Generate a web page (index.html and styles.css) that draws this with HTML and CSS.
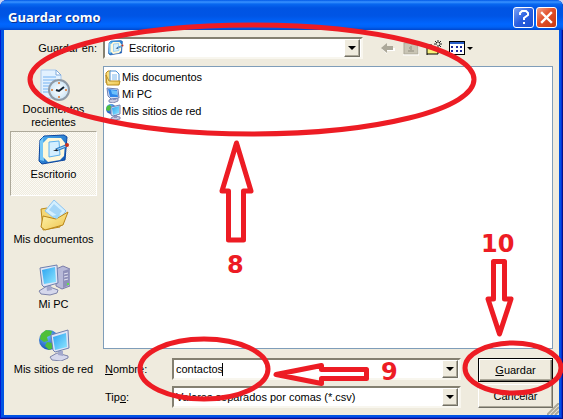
FILE: index.html
```html
<!DOCTYPE html>
<html lang="es">
<head>
  <meta charset="UTF-8">
  <title>Guardar como</title>
  <link rel="stylesheet" href="styles.css">
</head>
<body>

  <!-- Shared icons -->
  <svg class="defs" width="0" height="0" aria-hidden="true">
    <defs>
      <linearGradient id="screen" x1="0" y1="0" x2="1" y2="1">
        <stop offset="0" stop-color="#2ba3f0"/>
        <stop offset="1" stop-color="#8fe6ff"/>
      </linearGradient>
      <linearGradient id="folder" x1="0" y1="0" x2="1" y2="1">
        <stop offset="0" stop-color="#fff6b0"/>
        <stop offset="1" stop-color="#edc34c"/>
      </linearGradient>
      <linearGradient id="blue" x1="0" y1="0" x2="1" y2="1">
        <stop offset="0" stop-color="#4fb4f5"/>
        <stop offset="1" stop-color="#0b50b0"/>
      </linearGradient>
      <radialGradient id="globe" cx="0.4" cy="0.3" r="0.8">
        <stop offset="0" stop-color="#6fc4ff"/>
        <stop offset="1" stop-color="#0a3fae"/>
      </radialGradient>
      <radialGradient id="clock">
        <stop offset="0" stop-color="#ffffff"/>
        <stop offset="1" stop-color="#cbe4f6"/>
      </radialGradient>
    </defs>

    <symbol id="icon-recent" viewBox="0 0 32 32">
      <path d="M3 1h15l5 5v23H3z" fill="#e2f1ff" stroke="#a9c9ee"/>
      <path d="M18 1v5h5z" fill="#fff" stroke="#7fa9dc"/>
      <path d="M5 8h13M5 11h13M5 14h9M5 17h6M5 20h5M5 23h6" stroke="#75b2f2"/>
      <circle cx="21" cy="21" r="10" fill="url(#clock)" stroke="#8f9aa6" stroke-width="2"/>
      <path d="M21 13v2M21 27v2M13 21h2M27 21h2" stroke="#e0905a" stroke-width="2"/>
      <path d="M26 18l-5 4-3-1" fill="none" stroke="#123" stroke-width="2"/>
    </symbol>

    <symbol id="icon-desktop" viewBox="0 0 32 32">
      <path d="M6 2l20-1 3 2-2 23-23 4-3-3L2 6z" fill="url(#blue)" stroke="#0a459f"/>
      <path d="M2 7l3-4 1 24-4-1z" fill="#78c7f6"/>
      <path d="M10 4h13l4 5-1 13-4 4-12 2-5-5V9z" fill="#fff8d9"/>
      <path d="M11 8l10-1 1 14-11 2z" fill="#d4efff" stroke="#5cb0ee"/>
      <path d="M18 16l10-4" stroke="#2f7cc4" stroke-width="3"/>
      <path d="M18 16l10-4" stroke="#a8ddff"/>
      <path d="M15 17l4-2 1 2z" fill="#222"/>
      <circle cx="29" cy="11" r="2" fill="#c8321e"/>
    </symbol>

    <symbol id="icon-docs" viewBox="0 0 32 32">
      <path d="M3 10l6-1 3 3 10 1v15l-17 3z" fill="#f3d776" stroke="#bc8a1a"/>
      <path d="M16 1l12 11-8 10L7 12z" fill="#d3efff" stroke="#8cc4f0"/>
      <path d="M16 5l8 7-4 5-9-6z" fill="#a4d6f8"/>
      <path d="M5 17l13 3 12-7-5 13-18 5-4-3z" fill="url(#folder)" stroke="#b98518"/>
      <path d="M14 17l9-2-4 5z" fill="#9ad7fb"/>
    </symbol>

    <symbol id="icon-folder" viewBox="0 0 16 16">
      <path d="M1 3l2-2h3v12H1z" fill="#f9dc7c" stroke="#b98b1f"/>
      <path d="M5 1h6l3 3v8H5z" fill="#fff" stroke="#4a90d6"/>
      <path d="M7 5h5M7 7h5M7 9h5" stroke="#7bb8ef"/>
      <path d="M1 5l3 6h11l-1 4H2z" fill="url(#folder)" stroke="#b98b1f"/>
    </symbol>

    <symbol id="icon-pc-small" viewBox="0 0 16 16">
      <path d="M4 13l5-2 4 1v2l-5 2-4-1z" fill="#c9cce4" stroke="#8388b0"/>
      <path d="M8 10h3v3H8z" fill="#9297c0"/>
      <path d="M2 1l11 1 1 9-8 1-3-3z" fill="#d8e0f4" stroke="#7080b0"/>
      <path d="M3 2l9 1 1 7-8 0z" fill="#2f86ea"/>
      <path d="M6 3l6 1v4L7 7z" fill="#6cc0fb"/>
    </symbol>

    <symbol id="icon-network-small" viewBox="0 0 16 16">
      <circle cx="6" cy="5" r="5" fill="url(#globe)"/>
      <path d="M2 2l3-1 2 3-3 3-3-1z" fill="#4fbf3a"/>
      <path d="M6 14l4-2 5 1v2l-5 1-4-1z" fill="#c9cce4" stroke="#8388b0"/>
      <path d="M9 11h3v3H9z" fill="#9297c0"/>
      <path d="M6 3l9-2v9l-7 2-2-1z" fill="#d8e0f4" stroke="#7080b0"/>
      <path d="M7 4l7-2v7l-6 2z" fill="url(#screen)"/>
    </symbol>

    <symbol id="icon-pc" viewBox="0 0 32 32">
      <path d="M18 5l7-3 7 3v17l-8 3-6-3z" fill="#b8b9d8" stroke="#7b7ca8"/>
      <path d="M25 7l6-2v16l-6 3z" fill="#8f90b9"/>
      <path d="M26 10l4-1M26 13l4-1M26 16l4-1" stroke="#e3e3f2"/>
      <path d="M29 19h2v2h-2z" fill="#5fe04a"/>
      <path d="M1 27l8-5 11 4-1 3-7 2-9-1z" fill="#d6d8ec" stroke="#7e84aa"/>
      <path d="M8 20l5 1 1 5-5 1z" fill="#a3a8cc"/>
      <path d="M2 4l17-3 1 18-14 4-2-2z" fill="#dfe5f6" stroke="#6f7fae"/>
      <path d="M4 6l13-3 1 15-12 2z" fill="url(#screen)"/>
    </symbol>

    <symbol id="icon-network" viewBox="0 0 32 32">
      <circle cx="11" cy="11" r="10" fill="url(#globe)"/>
      <path d="M3 5l5-4 6 1-1 4-4 2 1 4-4 1-4-3zM9 13l5 1 1 5-4 2-4-4z" fill="#4fbf3a"/>
      <path d="M12 28l7-4 11 3v2l-7 3-9-1z" fill="#d6d8ec" stroke="#7e84aa"/>
      <path d="M20 21l5 1v5l-5-1z" fill="#a3a8cc"/>
      <path d="M13 6l17-5 1 18-14 4-2-2z" fill="#dfe5f6" stroke="#6f7fae"/>
      <path d="M15 8l13-4 1 14-12 3z" fill="url(#screen)"/>
    </symbol>
  </svg>

  <div class="window">
    <header class="titlebar">
      <h1>Guardar como</h1>
      <button class="title-btn help" aria-label="Ayuda">
        <svg viewBox="0 0 19 19"><path d="M6 7V5l2-2h4l2 2v2l-4 3v2M10 14v2" fill="none" stroke="#fff" stroke-width="2"/></svg>
      </button>
      <button class="title-btn close" aria-label="Cerrar">
        <svg viewBox="0 0 19 19"><path d="M5 5l9 9M14 5l-9 9" stroke="#fff" stroke-width="2.4" stroke-linecap="square"/></svg>
      </button>
    </header>

    <main class="client">
      <label class="look-label" for="lookIn">Gua<u>r</u>dar en:</label>
      <div class="look-row">
        <div class="combo">
          <svg class="icon-small"><use href="#icon-desktop"/></svg>
          <select id="lookIn">
            <option>Escritorio</option>
          </select>
          <span class="drop"></span>
        </div>
        <div class="toolbar">
          <button aria-label="Atrás">
            <svg viewBox="0 0 16 16"><path d="M2 9l5-4v3h8v3H7v3z" fill="#fff"/><path d="M1 8l6-5v3h6v4H7v3z" fill="#aca899"/></svg>
          </button>
          <button aria-label="Subir un nivel">
            <svg viewBox="0 0 16 16"><path d="M1 3h6l1 1h7v10H1z" fill="#c9c5b5" stroke="#aca899"/><path d="M5 11h6M6 8h1M8 6v4" stroke="#aca899" stroke-width="2"/><path d="M0 15h16V4" fill="none" stroke="#fff"/></svg>
          </button>
          <button aria-label="Crear nueva carpeta">
            <svg viewBox="0 0 16 16"><path d="M1 5h4l1 2h6v7H1z" fill="#f7f07a"/><path d="M1 15V5h5M1 14h11V8" fill="none" stroke="#000"/><path d="M12 0v3M12 5v3M8 4h3M13 4h3M9 1l2 2M15 1l-2 2M15 7l-2-2" stroke="#222"/></svg>
          </button>
          <button class="views" aria-label="Menú Ver">
            <svg viewBox="0 0 16 16"><path d="M0 1h16v14H0z"/><path d="M1 4h14v10H1z" fill="#fff"/><path d="M1 2h14v2H1z" fill="#2a5fc8"/><path d="M2 6h2v2H2zM7 6h2v2H7zM11 6h2v2h-2zM2 10h2v2H2zM7 10h2v2H7zM11 10h2v2h-2z" fill="#1c2a9a"/></svg>
            <span class="arrow"></span>
          </button>
        </div>
      </div>

      <nav class="places">
        <button class="place"><svg><use href="#icon-recent"/></svg>Documentos recientes</button>
        <button class="place selected"><svg><use href="#icon-desktop"/></svg>Escritorio</button>
        <button class="place"><svg><use href="#icon-docs"/></svg>Mis documentos</button>
        <button class="place"><svg><use href="#icon-pc"/></svg>Mi PC</button>
        <button class="place"><svg><use href="#icon-network"/></svg>Mis sitios de red</button>
      </nav>

      <ul class="files">
        <li><svg class="icon-small"><use href="#icon-folder"/></svg>Mis documentos</li>
        <li><svg class="icon-small"><use href="#icon-pc-small"/></svg>Mi PC</li>
        <li><svg class="icon-small"><use href="#icon-network-small"/></svg>Mis sitios de red</li>
      </ul>

      <form class="bottom">
        <div class="fields">
          <label for="fileName"><u>N</u>ombre:</label>
          <div class="combo">
            <input type="text" id="fileName" value="contactos">
            <span class="caret"></span>
            <span class="drop"></span>
          </div>
          <label for="fileType">Tip<u>o</u>:</label>
          <div class="combo">
            <select id="fileType">
              <option>Valores separados por comas (*.csv)</option>
            </select>
            <span class="drop"></span>
          </div>
        </div>
        <div class="actions">
          <button type="button" class="btn default"><span><u>G</u>uardar</span></button>
          <button type="button" class="btn">Cancelar</button>
        </div>
      </form>
    </main>

    <svg class="grip" viewBox="0 0 12 12" aria-hidden="true">
      <path d="M0 12L12 0M4 12l8-8M8 12l4-4" stroke="#aca899" stroke-width="2"/>
    </svg>

    <!-- Tutorial steps drawn over the dialog -->
    <svg class="marks" viewBox="0 0 563 419">
      <g fill="none" stroke="#ed1c24" stroke-width="5" stroke-linejoin="round">
        <ellipse cx="252" cy="79.500" rx="222" ry="54.500"/>
        <ellipse cx="204" cy="369" rx="64" ry="30"/>
        <ellipse cx="513" cy="368" rx="48" ry="25"/>
        <path d="M236.500 143L251 191h-7.500v49h-15v-49H222z"/>
        <path d="M499.500 334L511 299h-6.500v-37.500h-11V299H488z"/>
        <path d="M276 374.500L321.500 365.500v4h45v9h-45v5z"/>
      </g>
      <text x="227" y="273">8</text>
      <text x="381" y="380">9</text>
      <text x="481" y="252">10</text>
    </svg>
  </div>

</body>
</html>
```
FILE: styles.css
```css
* {
  box-sizing: border-box;
  margin: 0;
  padding: 0;
}

body {
  font-family: "Liberation Sans", Arial, sans-serif;
  font-size: 11px;
  line-height: 13px;
  color: #000;
  background: #c8d4f4;
}

button,
input,
select {
  font: inherit;
  color: inherit;
  border: none;
  background: none;
}

.defs {
  position: absolute;
}

.window {
  position: relative;
  display: flex;
  flex-direction: column;
  min-height: 100vh;
  padding: 0 4px 4px;
  background: #0054e3;
  border-radius: 7px 7px 0 0;
  box-shadow: inset 1px 0 #0019cf, inset -1px -1px #00138c, inset -2px -2px #0831d9;
  overflow: hidden;
}

/* Title bar */
.titlebar {
  display: flex;
  align-items: center;
  gap: 2px;
  height: 30px;
  margin: 0 -4px;
  padding: 4px 6px 0 8px;
  background: linear-gradient(#0058e6 0, #3a93ff 2px, #0868f0 4px, #0054e3 8px, #0055e5 16px, #0066ff 24px, #0062f5 27px, #0046cc 30px);
}

.titlebar h1 {
  flex: 1;
  font-family: "Open Sans", "Noto Sans", sans-serif;
  font-size: 13px;
  line-height: 18px;
  font-weight: bold;
  color: #fff;
  text-shadow: 1px 1px #0a2f8c;
}

.title-btn {
  width: 21px;
  height: 21px;
  border: 1px solid #fff;
  border-radius: 3px;
}

.title-btn svg {
  display: block;
  width: 19px;
  height: 19px;
}

.help {
  background: linear-gradient(135deg, #7ba2f5, #2a5fe0 50%, #1c50d0);
}

.close {
  background: linear-gradient(135deg, #f0a088, #e2502a 45%, #c83810);
}

/* Dialog body */
.client {
  flex: 1;
  display: grid;
  grid-template-columns: 87px 1fr;
  grid-template-rows: 22px 1fr auto;
  column-gap: 6px;
  padding: 7px 6px 7px;
  background: #efebde;
}

.look-label {
  align-self: center;
  justify-self: end;
}

.look-row {
  display: grid;
  grid-template-columns: 1fr 173px;
  gap: 17px;
}

.combo {
  position: relative;
  display: flex;
  align-items: center;
  height: 22px;
  padding: 1px;
  background: #fff;
  border: 2px solid;
  border-color: #848071 #f8f6ee #f8f6ee #848071;
}

.combo select,
.combo input {
  flex: 1;
  min-width: 0;
  height: 16px;
  padding-left: 1px;
  appearance: none;
  outline: none;
}

.combo .icon-small + select {
  padding-left: 5px;
}

.drop {
  display: flex;
  align-items: center;
  justify-content: center;
  width: 16px;
  height: 18px;
  background: #efebde;
  border: 1px solid;
  border-color: #fff #716f64 #716f64 #fff;
  box-shadow: inset -1px -1px #aca899;
}

.drop::before,
.arrow {
  content: "";
  border: solid transparent;
  border-width: 4px 4px 0;
  border-top-color: #000;
}

.caret {
  position: absolute;
  left: 48px;
  top: 3px;
  width: 1px;
  height: 13px;
  background: #000;
}

.icon-small {
  width: 16px;
  height: 16px;
  margin-left: 2px;
}

.toolbar {
  display: flex;
  align-items: center;
  gap: 7px;
}

.toolbar button {
  display: flex;
  align-items: center;
  gap: 2px;
}

.toolbar svg {
  width: 16px;
  height: 16px;
}

.toolbar .arrow {
  border-width: 3px 3px 0;
}

/* Places bar */
.places {
  grid-row: 2 / 4;
  display: grid;
  grid-template-columns: minmax(0, 1fr);
  grid-auto-rows: 65px;
  margin-top: 7px;
}

.place {
  display: flex;
  flex-direction: column;
  align-items: center;
  gap: 2px;
  padding: 2px 0;
  border: 1px solid transparent;
}

.place svg {
  flex: none;
  width: 32px;
  height: 32px;
}

.place.selected {
  border-color: #aca899 #fff #fff #aca899;
  background: repeating-conic-gradient(#fbfaf5 0 25%, #efebde 0 50%) 0 0 / 2px 2px;
}

/* File list */
.files {
  margin-top: 7px;
  padding: 2px 0;
  list-style: none;
  background: #fff;
  border: 1px solid #7f9db9;
}

.files li {
  display: flex;
  align-items: center;
  gap: 1px;
  height: 17px;
}

.files .icon-small {
  margin-left: 1px;
}

/* File name, type and buttons */
.bottom {
  display: grid;
  grid-template-columns: 1fr 75px;
  gap: 17px;
  margin-top: 9px;
}

.fields {
  display: grid;
  grid-template-columns: 67px 1fr;
  align-items: center;
  row-gap: 6px;
  padding-left: 2px;
}

.actions {
  display: grid;
  gap: 2px;
}

.btn {
  height: 24px;
  background: #efebde;
  border: 1px solid;
  border-color: #fff #716f64 #716f64 #fff;
  box-shadow: inset -1px -1px #aca899;
}

.btn.default {
  border-color: #000;
  box-shadow: inset 1px 1px #fff, inset -1px -1px #716f64, inset -2px -2px #aca899;
}

.grip {
  position: absolute;
  right: 4px;
  bottom: 4px;
  width: 12px;
  height: 12px;
}

/* Step marks */
.marks {
  position: absolute;
  inset: 0;
  width: 100%;
  height: 100%;
  pointer-events: none;
}

.marks text {
  font-family: "DejaVu Sans", Verdana, sans-serif;
  font-size: 24px;
  font-weight: bold;
  fill: #ed1c24;
}
```
